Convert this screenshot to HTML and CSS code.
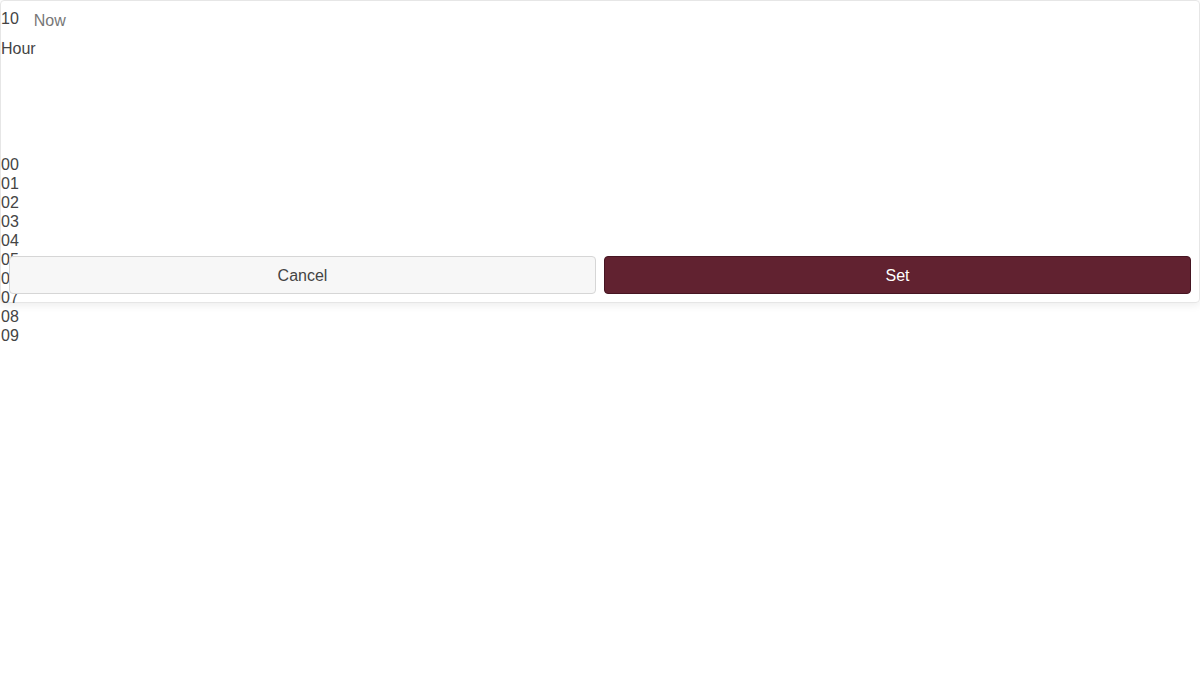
FILE: index.html
```html
<!DOCTYPE html>
<html>
<head>
<meta charset="utf-8">
<link rel="stylesheet" href="styles.css">
</head>
<body>
<div class="picker">
  <div class="picker-body">
    <div class="picker-head">
      <span class="picker-value">10</span>
      <span class="picker-now">Now</span>
    </div>
    <div class="picker-label">Hour</div>
    <ul class="picker-list">
      <li>00</li><li>01</li><li>02</li><li>03</li><li>04</li>
      <li>05</li><li>06</li><li>07</li><li>08</li><li>09</li>
    </ul>
  </div>
  <div class="picker-foot">
    <button class="btn btn-cancel">Cancel</button>
    <button class="btn btn-set">Set</button>
  </div>
</div>
</body>
</html>
```
FILE: styles.css
```css
html, body {
  margin: 0;
  padding: 0;
  font-family: "Liberation Sans", Arial, sans-serif;
  font-size: 16px;
  color: #444;
}
html {
  background: #fff;
}
body {
  min-height: 100vh;
}
.picker {
  box-sizing: border-box;
  width: 1200px;
  border: 1px solid #e6e6e6;
  border-radius: 4px;
  box-shadow: 0 2px 8px rgba(0, 0, 0, 0.08);
}
.picker-body {
  height: 247px;
}
.picker-head {
  display: flex;
  align-items: flex-start;
  padding-top: 8px;
  line-height: 19px;
}
.picker-now {
  color: #777;
  margin-left: 15px;
  padding-top: 2px;
}
.picker-label {
  margin-top: 9px;
  line-height: 19px;
}
.picker-list {
  list-style: none;
  margin: 97px 0 0;
  padding: 0;
  line-height: 19px;
}
.picker-foot {
  display: flex;
  gap: 8px;
  padding: 8px;
}
.btn {
  flex: 1;
  height: 38px;
  padding: 0;
  border-radius: 4px;
  font-family: "Liberation Sans", Arial, sans-serif;
  font-size: 16px;
  line-height: 19px;
  cursor: pointer;
}
.btn-cancel {
  background: #f7f7f7;
  border: 1px solid #d6d6d6;
  color: #444;
}
.btn-set {
  background: #612230;
  border: 1px solid #461522;
  color: #fff;
}
```
